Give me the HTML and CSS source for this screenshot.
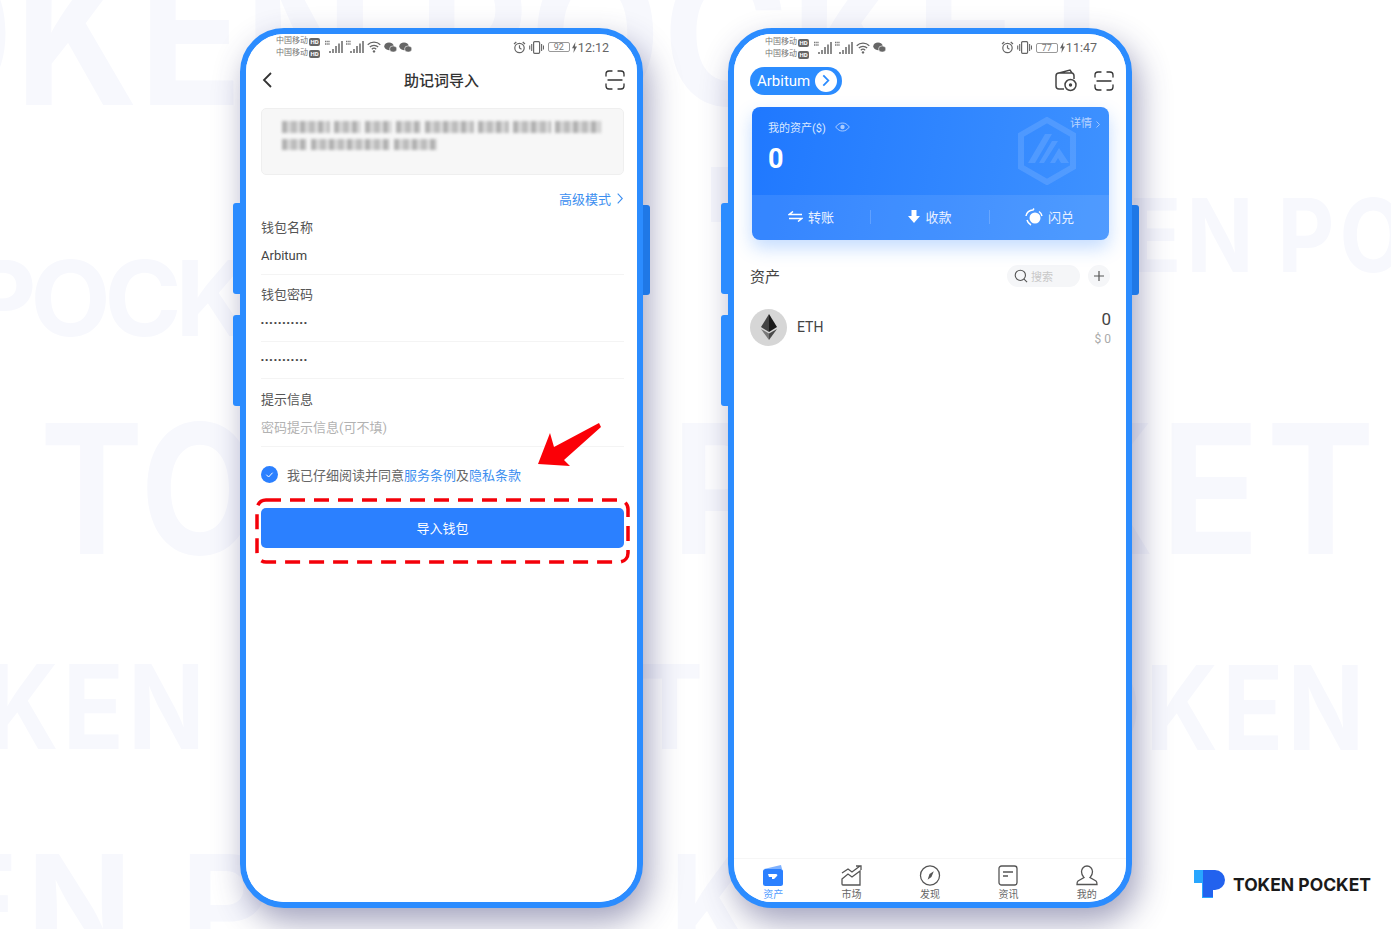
FILE: index.html
```html
<!DOCTYPE html>
<html lang="zh-CN">
<head>
  <meta charset="UTF-8">
  <title>Token Pocket</title>
  <link rel="stylesheet" href="styles.css">
</head>
<body>
  <svg class="defs" width="0" height="0">
    <symbol id="scan" viewBox="0 0 20 20">
      <path d="M1 6V4a3 3 0 0 1 3-3h3M13 1h3a3 3 0 0 1 3 3v2M1 14v2a3 3 0 0 0 3 3h3M13 19h3a3 3 0 0 0 3-3v-2M3 10h14" fill="none" stroke="#333" stroke-width="1.300" stroke-linecap="round"/>
    </symbol>
    <symbol id="signal" viewBox="0 0 19 14">
      <path d="M1 1.500h5M1 4h5" stroke="#777" stroke-width="1.300" stroke-dasharray="1.500 .7"/>
      <path d="M6 13v-2M9 13V9M12 13V6M15 13V3.500M18 13V1" stroke="#666" stroke-width="1.500"/>
    </symbol>
    <symbol id="wifi" viewBox="0 0 14 12">
      <path d="M.7 3.700a9 9 0 0 1 12.600 0M2.800 6a6 6 0 0 1 8.400 0M4.800 8.200a3.200 3.200 0 0 1 4.400 0" fill="none" stroke="#666" stroke-width="1.200"/>
      <circle cx="7" cy="10.400" r="1.200" fill="#666"/>
    </symbol>
    <symbol id="wechat" viewBox="0 0 13 11">
      <ellipse cx="5" cy="4.300" rx="4.700" ry="3.900" fill="#666"/>
      <ellipse cx="9.200" cy="7" rx="3.700" ry="3.100" fill="#666" stroke="#fff" stroke-width=".6"/>
    </symbol>
    <symbol id="alarm" viewBox="0 0 13 13">
      <circle cx="6.500" cy="7" r="4.700" fill="none" stroke="#666" stroke-width="1.200"/>
      <path d="M6.500 4.200V7l2 1.200M1 3l2.300-2M12 3L9.700 1" fill="none" stroke="#666" stroke-width="1.200"/>
    </symbol>
    <symbol id="vibrate" viewBox="0 0 15 13">
      <rect x="4.600" y=".7" width="6" height="11.600" rx="1" fill="none" stroke="#666" stroke-width="1.200"/>
      <path d="M2.700 3v7M.7 4.500v4M12.600 3v7M14.500 4.500v4" stroke="#666" stroke-width="1.100"/>
    </symbol>
    <symbol id="bolt" viewBox="0 0 5 11">
      <path d="M3.400 0L0 6.200h2L1.400 11 5 4.500H3z" fill="#666"/>
    </symbol>
  </svg>

  <div class="watermark">
    <span class="wm wm-a">OKEN POCKET</span>
    <span class="wm wm-b">POCK</span>
    <span class="wm wm-c">TO</span>
    <span class="wm wm-c2">P</span>
    <span class="wm wm-c3">KET</span>
    <span class="wm wm-d">EN PO</span>
    <span class="wm wm-f">KEN</span>
    <span class="wm wm-f2">T</span>
    <span class="wm wm-g">OKEN</span>
    <span class="wm wm-h">EN P</span>
    <span class="wm wm-h2">K</span>
    <i class="wm-block"></i>
  </div>

  <main class="stage">
    <!-- left phone: mnemonic import -->
    <section class="phone">
      <i class="key key-left key-up"></i>
      <i class="key key-left key-down"></i>
      <i class="key key-right"></i>
      <div class="screen">
        <div class="status status-one">
          <div class="carriers">
            <div>中国移动<b>HD</b></div>
            <div>中国移动<b>HD</b></div>
          </div>
          <svg class="ico-signal"><use href="#signal"/></svg>
          <svg class="ico-signal"><use href="#signal"/></svg>
          <svg class="ico-wifi"><use href="#wifi"/></svg>
          <svg class="ico-wechat"><use href="#wechat"/></svg>
          <svg class="ico-wechat"><use href="#wechat"/></svg>
          <div class="status-right">
            <svg class="ico-alarm"><use href="#alarm"/></svg>
            <svg class="ico-vibrate"><use href="#vibrate"/></svg>
            <span class="battery">92</span>
            <svg class="ico-bolt"><use href="#bolt"/></svg>
            <span class="time">12:12</span>
          </div>
        </div>

        <header class="nav">
          <svg class="back" width="10" height="16" viewBox="0 0 10 16"><path d="M9 1L2 8l7 7" fill="none" stroke="#333" stroke-width="1.800"/></svg>
          <h1>助记词导入</h1>
          <svg class="ico-scan"><use href="#scan"/></svg>
        </header>

        <div class="form">
          <div class="mnemonic">
            <div class="mosaic mosaic-top">
              <i class="w48"></i><i class="w27"></i><i class="w27"></i><i class="w25"></i><i class="w49"></i><i class="w31"></i><i class="w38"></i><i class="w46"></i>
            </div>
            <div class="mosaic">
              <i class="w25"></i><i class="w79"></i><i class="w43"></i>
            </div>
          </div>

          <div class="advanced">
            <span>高级模式</span>
            <svg width="6" height="11" viewBox="0 0 6 11"><path d="M.7.7l4.600 4.800L.7 10.300" fill="none" stroke="#3d8ff0" stroke-width="1.100"/></svg>
          </div>

          <div class="field field-first">
            <div class="label">钱包名称</div>
            <div class="value">Arbitum</div>
          </div>
          <div class="field">
            <div class="label">钱包密码</div>
            <div class="value dots">•••••••••••</div>
          </div>
          <div class="field field-plain">
            <div class="value dots">•••••••••••</div>
          </div>
          <div class="field field-hint">
            <div class="label">提示信息</div>
            <div class="value placeholder">密码提示信息(可不填)</div>
          </div>

          <div class="agree">
            <svg width="17" height="17" viewBox="0 0 17 17"><circle cx="8.500" cy="8.500" r="8.500" fill="#2b80ff"/><path d="M5.300 8.700l2.300 2.300 4-4.300" fill="none" stroke="#fff" stroke-width="1"/></svg>
            <span>我已仔细阅读并同意<a>服务条例</a>及<a>隐私条款</a></span>
          </div>

          <button class="submit">导入钱包</button>
        </div>

        <svg class="dash" width="376" height="67" viewBox="0 0 376 67">
          <rect x="2" y="2" width="371" height="62" rx="9" fill="none" stroke="#f40009" stroke-width="3.500" stroke-dasharray="15 9"/>
        </svg>
        <svg class="arrow" width="70" height="50" viewBox="0 0 70 50">
          <path d="M67 1L69 5 32 38 38 44 6 42 18 11 22 25z" fill="#fb0007"/>
        </svg>
      </div>
    </section>

    <!-- right phone: assets -->
    <section class="phone phone-wide">
      <i class="key key-left key-up"></i>
      <i class="key key-left key-down"></i>
      <i class="key key-right"></i>
      <div class="screen">
        <div class="status status-two">
          <div class="carriers">
            <div>中国移动<b>HD</b></div>
            <div>中国移动<b>HD</b></div>
          </div>
          <svg class="ico-signal"><use href="#signal"/></svg>
          <svg class="ico-signal"><use href="#signal"/></svg>
          <svg class="ico-wifi"><use href="#wifi"/></svg>
          <svg class="ico-wechat"><use href="#wechat"/></svg>
          <div class="status-right">
            <svg class="ico-alarm"><use href="#alarm"/></svg>
            <svg class="ico-vibrate"><use href="#vibrate"/></svg>
            <span class="battery">77</span>
            <svg class="ico-bolt"><use href="#bolt"/></svg>
            <span class="time">11:47</span>
          </div>
        </div>

        <header class="topbar">
          <div class="pill">
            <span>Arbitum</span>
            <i class="pill-go"><svg width="8" height="13" viewBox="0 0 8 13"><path d="M1.300 1.300l5 5.200-5 5.200" fill="none" stroke="#2b8cff" stroke-width="1.800"/></svg></i>
          </div>
          <div class="topbar-icons">
            <svg width="22" height="23" viewBox="0 0 22 23"><path d="M9 20H4a3 3 0 0 1-3-3V7a3 3 0 0 1 3-3l11-3 2 3a3 3 0 0 1 2 3v3M3 4h14" fill="none" stroke="#444" stroke-width="1.500"/><circle cx="15.500" cy="16" r="5.500" fill="#fff" stroke="#444" stroke-width="1.500"/><circle cx="15.500" cy="16" r="1.700" fill="#444"/></svg>
            <svg class="ico-scan"><use href="#scan"/></svg>
          </div>
        </header>

        <div class="card">
          <div class="card-top">
            <svg class="hex" width="60" height="68" viewBox="0 0 60 68">
              <path d="M30 3l26 15v32L30 65 4 50V18z" fill="none" stroke="#fff" stroke-opacity=".12" stroke-width="6"/>
              <path d="M11 46l17-29h7L18 46zM22 46l13-22h6L27 46zM33 46l9-15 10 15h-8l-3-5-3 5z" fill="#fff" fill-opacity=".12"/>
            </svg>
            <div class="card-title">
              <span>我的资产($)</span>
              <svg width="15" height="10" viewBox="0 0 15 10"><path d="M.7 5C3 2 5 1 7.500 1S12 2 14.300 5C12 8 10 9 7.500 9S3 8 .7 5z" fill="none" stroke="#a9cbff" stroke-width="1"/><circle cx="7.500" cy="5" r="2.200" fill="#a9cbff"/></svg>
            </div>
            <div class="balance">0</div>
            <div class="detail">详情<svg width="4" height="7" viewBox="0 0 4 7"><path d="M.5.5l3 3-3 3" fill="none" stroke="#b9d4ff" stroke-width=".8"/></svg></div>
          </div>
          <div class="card-actions">
            <div class="action">
              <svg width="15" height="11" viewBox="0 0 15 11"><path d="M5 .5L1 3.600h13M10 10.500l4-3.100H1" fill="none" stroke="#fff" stroke-width="1.500"/></svg>
              <span>转账</span>
            </div>
            <div class="action">
              <svg width="12" height="13" viewBox="0 0 12 13"><path d="M3.500 0h5v6H12l-6 7-6-7h3.500z" fill="#fff"/></svg>
              <span>收款</span>
            </div>
            <div class="action">
              <svg width="18" height="18" viewBox="0 0 18 18"><circle cx="10" cy="10" r="5.500" fill="#fff"/><path d="M1 8a7 7 0 0 1 7-6l1-1.500M17 8a7 7 0 0 0-3-4.500M2 12a8 8 0 0 0 4 5" fill="none" stroke="#fff" stroke-width="1.500"/></svg>
              <span>闪兑</span>
            </div>
          </div>
        </div>

        <div class="assets-head">
          <h2>资产</h2>
          <div class="search">
            <svg width="14" height="14" viewBox="0 0 15 15"><circle cx="6.800" cy="6.800" r="5.500" fill="none" stroke="#555" stroke-width="1.200"/><path d="M10.800 10.800L14 14" stroke="#555" stroke-width="1.200"/></svg>
            <span>搜索</span>
          </div>
          <div class="plus">
            <svg width="10" height="10" viewBox="0 0 10 10"><path d="M5 0v10M0 5h10" stroke="#555" stroke-width="1.200"/></svg>
          </div>
        </div>

        <div class="token">
          <div class="token-logo">
            <svg width="16" height="26" viewBox="0 0 16 26">
              <path d="M8 0L0 13l8 5z" fill="#444"/>
              <path d="M8 0l8 13-8 5z" fill="#1a1a1a"/>
              <path d="M0 15l8 11v-6.500z" fill="#777"/>
              <path d="M16 15L8 26v-6.500z" fill="#4a4a4a"/>
            </svg>
          </div>
          <span class="token-name">ETH</span>
          <div class="token-amount">
            <div class="qty">0</div>
            <div class="usd">$ 0</div>
          </div>
        </div>

        <nav class="tabs">
          <div class="tab tab-on">
            <svg width="22" height="21" viewBox="0 0 22 21"><path d="M2 4l17-4 1 4z" fill="#7fb2ff"/><rect x="1" y="4" width="20" height="17" rx="2.500" fill="#2b80ff"/><path d="M6 9h8c1 0 2 1 1 2l-3 3h-2v-2H7z" fill="#fff"/></svg>
            <span>资产</span>
          </div>
          <div class="tab">
            <svg width="21" height="21" viewBox="0 0 21 21"><path d="M1 8l6-4 4 3 8-6M15 1h5v4" fill="none" stroke="#555" stroke-width="1.300"/><path d="M1 14l6-5 4 3 8-6v14H2a1 1 0 0 1-1-1z" fill="none" stroke="#555" stroke-width="1.300"/></svg>
            <span>市场</span>
          </div>
          <div class="tab">
            <svg width="22" height="21" viewBox="0 0 22 22"><circle cx="11" cy="11" r="10" fill="none" stroke="#555" stroke-width="1.300"/><path d="M15 6.500l-2.500 6-4 3 2-6z" fill="#555"/></svg>
            <span>发现</span>
          </div>
          <div class="tab">
            <svg width="20" height="21" viewBox="0 0 20 21"><rect x="1" y="1" width="18" height="19" rx="2.500" fill="none" stroke="#555" stroke-width="1.300"/><path d="M5 7h10M5 11h5" stroke="#555" stroke-width="1.300"/></svg>
            <span>资讯</span>
          </div>
          <div class="tab">
            <svg width="22" height="21" viewBox="0 0 22 21"><path d="M11 1a5.500 5.500 0 0 0-5.500 5.700c0 3 1.500 4.500 2.500 5.800L2 16c-1 .8-1 2-1 3.500h20c0-1.500 0-2.700-1-3.500l-6-3.500c1-1.300 2.500-2.800 2.500-5.800A5.500 5.500 0 0 0 11 1z" fill="none" stroke="#555" stroke-width="1.300"/></svg>
            <span>我的</span>
          </div>
        </nav>
      </div>
    </section>
  </main>

  <div class="brand">
    <svg width="32" height="30" viewBox="0 0 32 30">
      <path d="M0 1h19v28H8V14H0z" fill="#28a6ff"/>
      <path d="M9 1h12a10 10 0 0 1 0 20h-2v7H9z" fill="#2262ee"/>
    </svg>
    <span>TOKEN POCKET</span>
  </div>
</body>
</html>
```

FILE: styles.css
```css
* {
  box-sizing: border-box;
}

html, body {
  margin: 0;
  height: 929px;
  overflow: hidden;
}

body {
  position: relative;
  background: #fff;
  font-family: Roboto, "Noto Sans CJK SC", sans-serif;
  color: #333;
}

.defs {
  position: absolute;
}

/* background letters */
.watermark {
  position: absolute;
  inset: 0;
  overflow: hidden;
}

.wm {
  position: absolute;
  font-family: Inter, sans-serif;
  font-weight: 700;
  line-height: 1;
  white-space: nowrap;
  color: #f7f8fd;
  transform: scaleX(0.86);
  transform-origin: left top;
}

.wm-a { left: -118px; top: -66px; font-size: 198px; letter-spacing: 2px; }
.wm-b { left: -31px; top: 246px; font-size: 104px; letter-spacing: -6px; transform: none; }
.wm-c { left: 40px; top: 399px; font-size: 180px; letter-spacing: 2px; }
.wm-c2 { left: 672px; top: 399px; font-size: 180px; }
.wm-c3 { right: 9px; top: 399px; font-size: 180px; letter-spacing: 8px; transform: scaleX(0.9); transform-origin: right top; }
.wm-d { left: 1128px; top: 184px; font-size: 102px; letter-spacing: 6px; word-spacing: -8px; }
.wm-f { left: -14px; top: 648px; font-size: 117px; letter-spacing: 5px; }
.wm-f2 { left: 636px; top: 648px; font-size: 117px; }
.wm-g { right: 22px; top: 649px; font-size: 117px; letter-spacing: 5px; transform-origin: right top; }
.wm-h { left: -65px; top: 835px; font-size: 138px; letter-spacing: 8px; transform: none; }
.wm-h2 { left: 670px; top: 835px; font-size: 138px; }

.wm-block {
  position: absolute;
  left: 711px;
  top: 167px;
  width: 20px;
  height: 55px;
  background: #f7f8fd;
}

/* phones */
.stage {
  position: relative;
  display: flex;
  gap: 85px;
  padding: 28px 0 0 240px;
}

.phone {
  position: relative;
  width: 403px;
  height: 880px;
  border: 6px solid #2b8cff;
  border-radius: 44px;
  background: #fff;
  box-shadow: 6px 14px 32px rgba(50, 50, 110, 0.45);
}

.phone-wide {
  width: 404px;
}

.key {
  position: absolute;
  width: 7px;
}

.key-left {
  left: -13px;
  height: 91px;
  background: #2b8cff;
  border-radius: 3px 0 0 3px;
}

.key-up { top: 169px; }
.key-down { top: 281px; }

.key-right {
  right: -13px;
  top: 171px;
  height: 90px;
  background: #1f78e6;
  border-radius: 0 3px 3px 0;
}

.screen {
  position: relative;
  display: flex;
  flex-direction: column;
  height: 100%;
  border-radius: 38px;
  overflow: hidden;
  background: #fff;
}

/* status bar */
.status {
  display: flex;
  align-items: center;
  height: 26px;
  font-size: 8px;
  color: #777;
  flex: none;
}

.status-one { padding: 0 28px 0 30px; }
.status-two { padding: 1px 29px 0 31px; }

.carriers {
  width: 48px;
  line-height: 12px;
  white-space: nowrap;
}

.carriers b {
  display: inline-block;
  width: 11px;
  height: 8px;
  margin-left: 1px;
  border-radius: 2px;
  background: #666;
  color: #fff;
  font-size: 6px;
  line-height: 8px;
  text-align: center;
  vertical-align: -1px;
}

.ico-signal { width: 19px; height: 14px; margin-right: 2px; }
.ico-wifi { width: 14px; height: 12px; margin: 0 3px 0 1px; }
.ico-wechat { width: 13px; height: 11px; margin-right: 2px; }
.ico-alarm { width: 13px; height: 13px; margin-right: 3px; }
.ico-vibrate { width: 15px; height: 13px; margin-right: 4px; }
.ico-bolt { width: 5px; height: 11px; margin: 0 1px 0 2px; }

.status-right {
  display: flex;
  align-items: center;
  margin-left: auto;
}

.battery {
  width: 22px;
  height: 10px;
  border: 1px solid #999;
  border-radius: 2px;
  font-size: 9px;
  line-height: 9px;
  text-align: center;
  color: #777;
}

.time {
  font-size: 12.5px;
  color: #666;
}

/* nav */
.nav {
  position: relative;
  display: flex;
  align-items: center;
  justify-content: space-between;
  height: 40px;
  padding: 0 12px 0 16px;
  flex: none;
}

.nav h1 {
  position: absolute;
  left: 0;
  right: 0;
  margin: 2px 0 0;
  font-size: 15px;
  font-weight: 500;
  line-height: 20px;
  text-align: center;
  color: #333;
}

.ico-scan {
  width: 20px;
  height: 20px;
}

/* form */
.form {
  padding: 8px 13px 0 15px;
}

.mnemonic {
  height: 67px;
  padding: 12px 20px;
  background: #f7f7f7;
  border: 1px solid #efefef;
  border-radius: 5px;
}

.mosaic {
  display: flex;
  gap: 4px;
  height: 11px;
  filter: blur(1.8px);
}

.mosaic-top {
  height: 12px;
  margin-bottom: 6px;
}

.mosaic i {
  height: 100%;
  background: repeating-linear-gradient(90deg, #b0b0b0 0 5px, #d8d8d8 5px 9px, #bcbcbc 9px 15px, #e2e2e2 15px 18px);
}

.w25 { width: 25px; }
.w27 { width: 27px; }
.w31 { width: 31px; }
.w38 { width: 38px; }
.w43 { width: 43px; }
.w46 { width: 46px; }
.w48 { width: 48px; }
.w49 { width: 49px; }
.w79 { width: 79px; }

.advanced {
  display: flex;
  align-items: center;
  justify-content: flex-end;
  gap: 6px;
  height: 18px;
  margin-top: 14px;
  padding-right: 1px;
  font-size: 13px;
  color: #3d8ff0;
}

.field {
  margin-top: 11px;
  padding-bottom: 9px;
  border-bottom: 1px solid #f4f4f4;
  font-size: 13px;
  line-height: 18px;
}

.field-first { margin-top: 12px; }
.field-hint { margin-top: 12px; }

.field-plain {
  margin-top: 0;
  padding-top: 9px;
}

.label {
  color: #555;
}

.value {
  margin-top: 10px;
  color: #444;
}

.field-plain .value {
  margin-top: 0;
}

.dots {
  font-family: "Liberation Sans", sans-serif;
  font-size: 8px;
  letter-spacing: 1.500px;
}

.placeholder {
  color: #b2b2b2;
}

.agree {
  display: flex;
  align-items: center;
  gap: 9px;
  height: 18px;
  margin-top: 18px;
  font-size: 13px;
  color: #666;
}

.agree a {
  color: #3d8ff0;
}

.submit {
  display: block;
  width: 100%;
  height: 40px;
  margin-top: 25px;
  padding: 0 0 2px;
  border: none;
  border-radius: 5px;
  background: #2b80ff;
  color: #fff;
  font-family: inherit;
  font-size: 13px;
}

.dash {
  position: absolute;
  left: 9px;
  top: 464px;
}

.arrow {
  position: absolute;
  left: 286px;
  top: 388px;
}

/* assets screen */
.topbar {
  display: flex;
  align-items: center;
  justify-content: space-between;
  height: 40px;
  padding: 1px 12px 0 16px;
  flex: none;
}

.pill {
  display: flex;
  align-items: center;
  justify-content: space-between;
  width: 92px;
  height: 28px;
  padding: 0 5px 0 7px;
  border-radius: 14px;
  background: #2b8cff;
  color: #fff;
  font-size: 15px;
}

.pill-go {
  display: flex;
  align-items: center;
  justify-content: center;
  width: 22px;
  height: 22px;
  border-radius: 50%;
  background: #fff;
}

.topbar-icons {
  display: flex;
  align-items: center;
  gap: 17px;
}

.card {
  position: relative;
  display: flex;
  flex-direction: column;
  width: 357px;
  height: 133px;
  margin: 7px 0 0 18px;
  border-radius: 8px;
  background: linear-gradient(100deg, #1f78ff, #3f92ff);
  color: #fff;
  box-shadow: 0 8px 18px rgba(43, 128, 255, 0.28);
  flex: none;
}

.card-top {
  position: relative;
  height: 88px;
  padding: 12px 16px 0;
}

.hex {
  position: absolute;
  left: 265px;
  top: 10px;
}

.card-title {
  display: flex;
  align-items: center;
  gap: 9px;
  height: 16px;
  font-size: 11px;
  color: #d9e8ff;
}

.balance {
  margin-top: 8px;
  font-size: 27px;
  font-weight: 700;
  line-height: 32px;
}

.detail {
  position: absolute;
  right: 9px;
  top: 10px;
  display: flex;
  align-items: center;
  gap: 4px;
  font-size: 11px;
  line-height: 14px;
  color: #b9d4ff;
}

.card-actions {
  display: flex;
  align-items: center;
  height: 45px;
  padding-bottom: 2px;
  border-radius: 0 0 8px 8px;
  background: rgba(255, 255, 255, 0.09);
}

.action {
  display: flex;
  align-items: center;
  justify-content: center;
  gap: 5px;
  width: 119px;
  height: 14px;
  font-size: 13px;
  color: #e9f1ff;
  border-right: 1px solid rgba(255, 255, 255, 0.18);
}

.action:last-child {
  border-right: none;
}

.assets-head {
  display: flex;
  align-items: center;
  height: 22px;
  margin-top: 25px;
  padding: 0 16px;
  flex: none;
}

.assets-head h2 {
  margin: 2px auto 0 0;
  font-size: 15px;
  font-weight: 400;
  line-height: 20px;
  color: #444;
}

.search {
  display: flex;
  align-items: center;
  gap: 3px;
  width: 73px;
  height: 22px;
  padding-left: 7px;
  border-radius: 11px;
  background: #f5f6f8;
  font-size: 11px;
  color: #c8c8c8;
}

.plus {
  display: flex;
  align-items: center;
  justify-content: center;
  width: 22px;
  height: 22px;
  margin-left: 8px;
  border-radius: 50%;
  background: #f5f6f8;
}

.token {
  display: flex;
  align-items: center;
  height: 38px;
  margin-top: 21px;
  padding: 0 15px 0 16px;
  flex: none;
}

.token-logo {
  display: flex;
  align-items: center;
  justify-content: center;
  width: 37px;
  height: 37px;
  border-radius: 50%;
  background: #d6d6d6;
}

.token-name {
  margin-left: 10px;
  font-size: 14px;
  color: #444;
}

.token-amount {
  margin: 4px 0 0 auto;
  text-align: right;
}

.qty {
  font-size: 17px;
  line-height: 20px;
  color: #444;
}

.usd {
  font-size: 12px;
  line-height: 21px;
  color: #aaa;
}

.tabs {
  display: flex;
  margin-top: auto;
  height: 44px;
  border-top: 1px solid #f6f6f6;
  flex: none;
}

.tab {
  display: flex;
  flex-direction: column;
  align-items: center;
  flex: 1;
  padding-top: 6px;
  font-size: 10px;
  line-height: 12px;
  color: #666;
}

.tab svg {
  flex: none;
  margin-bottom: 3px;
}

.tab-on {
  color: #4f9bff;
}

/* logo */
.brand {
  position: absolute;
  left: 1194px;
  top: 869px;
  display: flex;
  align-items: center;
  gap: 7px;
  font-family: Inter, sans-serif;
  font-weight: 700;
  font-size: 17.500px;
  color: #1a1a1a;
}
```
